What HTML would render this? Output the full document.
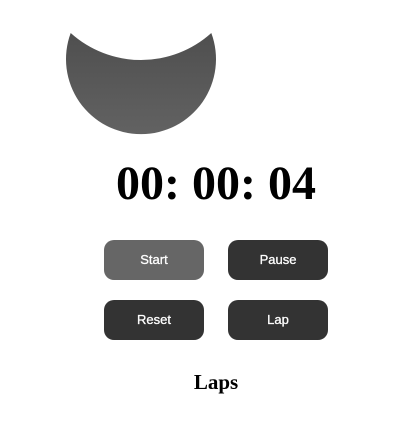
<!DOCTYPE html>
<html><head><style>
body{margin:0;width:412px;height:448px;background:#fff;position:relative;overflow:hidden}
svg{position:absolute;left:0;top:0}
.t{position:absolute;left:0;width:432px;text-align:center;top:154px;font:bold 48px "Liberation Serif",serif;color:#000;line-height:60px}
.b{position:absolute;width:100px;height:40px;border-radius:10px;background:#333;color:#fff;font:13px "Liberation Sans",sans-serif;line-height:40px;text-align:center;-webkit-text-stroke:0.3px #fff}
.l{position:absolute;left:0;width:432px;text-align:center;top:370px;font:bold 21px "Liberation Serif",serif}
</style></head><body>
<svg width="412" height="448"><defs><linearGradient id="g" x1="0" y1="0" x2="0" y2="1"><stop offset="0" stop-color="#4f4f4f"/><stop offset="1" stop-color="#626262"/></linearGradient></defs>
<path d="M70.7,33 A75,75 0 1 0 211.3,33 A105,105 0 0 1 70.7,33 Z" fill="url(#g)"/></svg>
<div class="t">00: 00: 04</div>
<div class="b" style="left:104px;top:240px;background:#666">Start</div>
<div class="b" style="left:228px;top:240px">Pause</div>
<div class="b" style="left:104px;top:300px">Reset</div>
<div class="b" style="left:228px;top:300px">Lap</div>
<div class="l">Laps</div>
</body></html>
